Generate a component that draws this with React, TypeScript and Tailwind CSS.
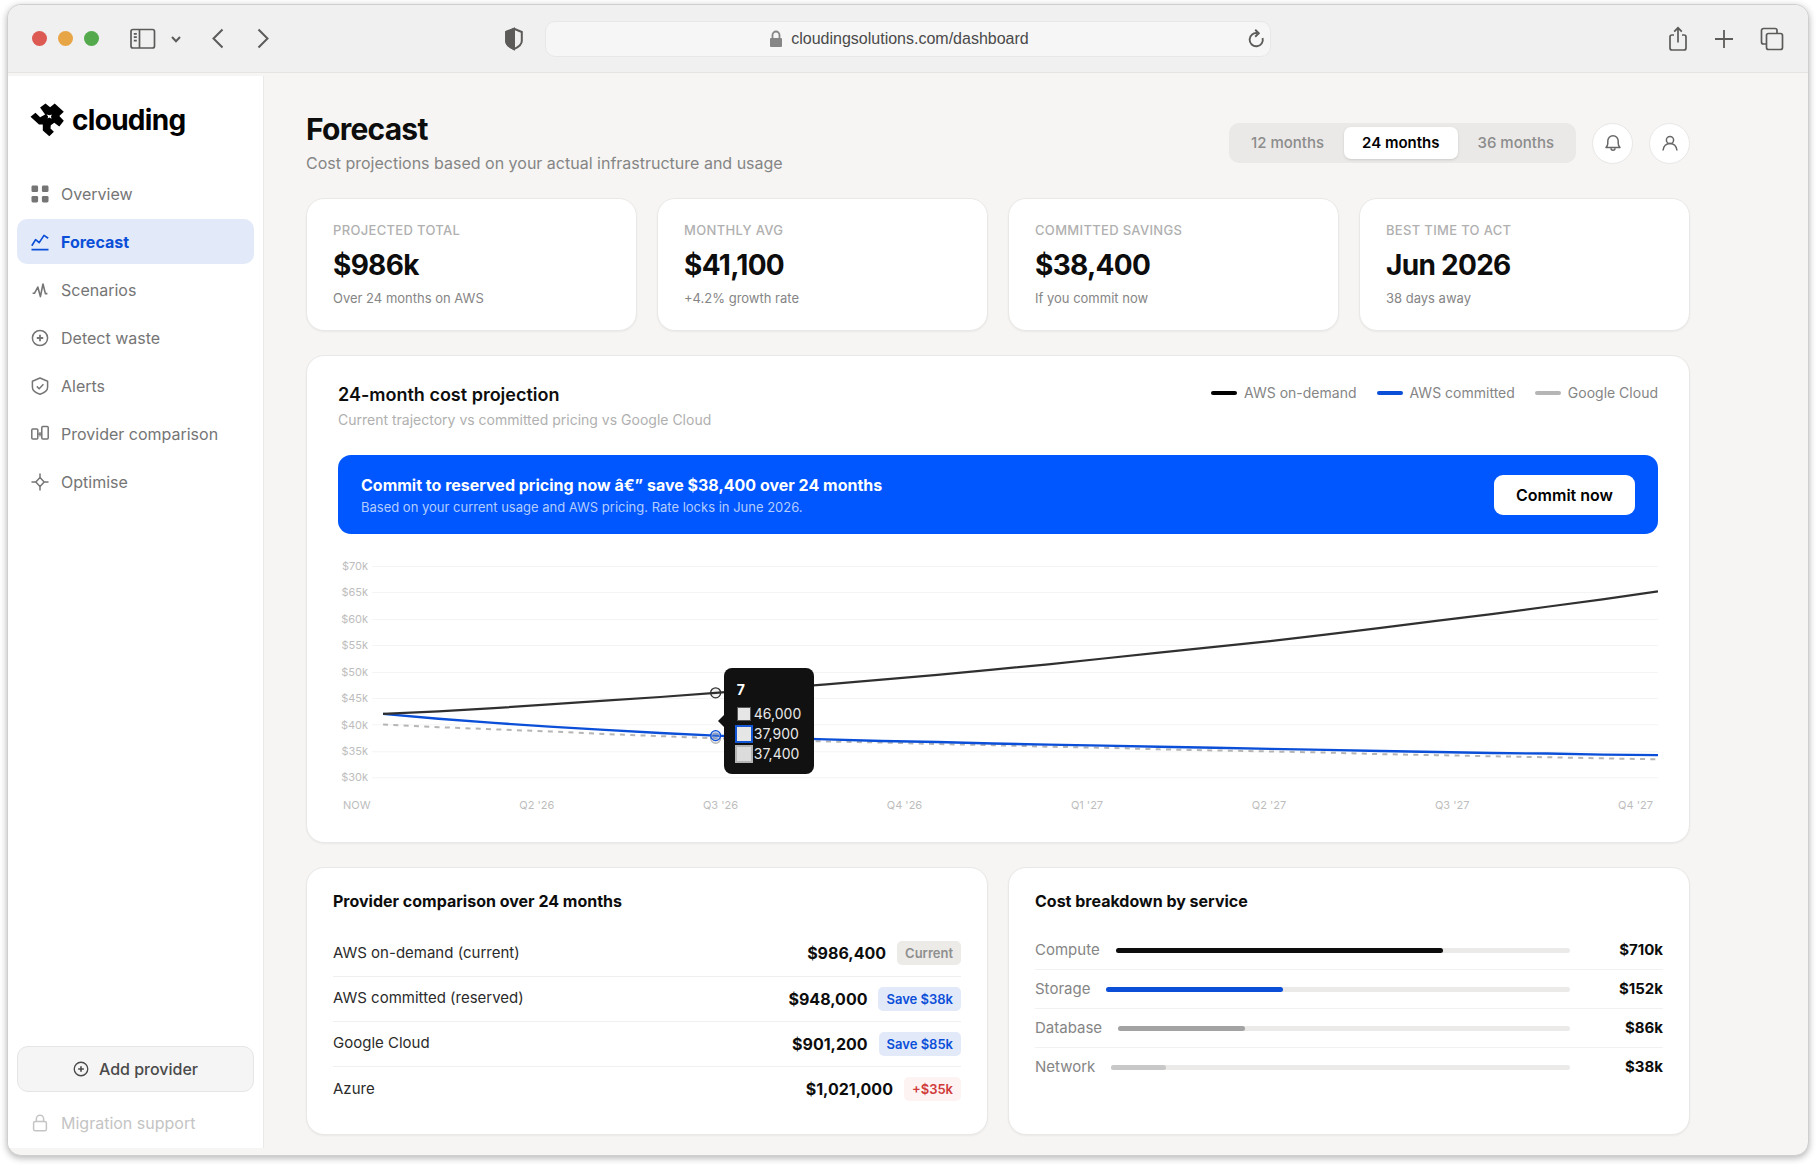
import React, { useState } from 'react';

type IconProps = { className?: string };

const Svg: React.FC<{ box?: string; className?: string; width?: number; children: React.ReactNode }> = ({
  box = '0 0 18 18',
  className = 'size-[18px]',
  width = 1.5,
  children,
}) => (
  <svg viewBox={box} className={className} fill="none" stroke="currentColor" strokeWidth={width} aria-hidden="true">
    {children}
  </svg>
);

const OverviewIcon = () => (
  <Svg>
    <g fill="currentColor" stroke="none">
      <rect x="0.5" y="0.5" width="6.6" height="6.6" rx="1.4" />
      <rect x="10.9" y="0.5" width="6.6" height="6.6" rx="1.4" />
      <rect x="0.5" y="10.9" width="6.6" height="6.6" rx="1.4" />
      <rect x="10.9" y="10.9" width="6.6" height="6.6" rx="1.4" />
    </g>
  </Svg>
);

const ForecastIcon = () => (
  <Svg width={1.7}>
    <path d="M0.8 12.8 4.6 6.6l3.6 3L13 2.4l4.2 2.9" strokeLinejoin="round" />
    <path d="M0.5 16.6h17" />
  </Svg>
);

const ScenariosIcon = () => (
  <Svg width={1.6}>
    <path d="M1.6 12.2h2L6.8 6l2.6 9.6L12 3l2.4 9.6h2" strokeLinejoin="round" />
  </Svg>
);

const CirclePlusIcon: React.FC<IconProps> = ({ className }) => (
  <Svg className={className}>
    <circle cx="9" cy="9" r="7.6" />
    <path d="M9 5.8v6.4M5.8 9h6.4" strokeWidth="1.8" />
  </Svg>
);

const AlertsIcon = () => (
  <Svg>
    <path d="M9 1 16.6 4.300v6c0 3.600-3.400 5.600-7.600 6.900-4.200-1.300-7.600-3.300-7.600-6.900v-6z" strokeLinejoin="round" />
    <path d="m5.8 9.4 2.4 2.3 4.200-4.400" />
  </Svg>
);

const CompareIcon = () => (
  <Svg>
    <rect x="0.8" y="4" width="6" height="10" rx="1" />
    <rect x="10.8" y="1.5" width="6.4" height="12.5" rx="1" />
    <path d="M6.8 9.2h4M9 7v4.4" strokeWidth="1.2" />
  </Svg>
);

const OptimiseIcon = () => (
  <Svg>
    <path d="m9 4.5 4.2 4.5L9 13.5 4.8 9z" strokeLinejoin="round" />
    <path d="M9 0.5v4M9 13.5v4M0.500 9h4.300M13.200 9h4.300" />
  </Svg>
);

const LockIcon = () => (
  <Svg>
    <rect x="2.6" y="7.4" width="12.8" height="9.4" rx="1.6" />
    <path d="M5.4 7.4V4.8a3.6 3.6 0 0 1 7.2 0v2.6" />
  </Svg>
);

const LogoMark = () => (
  <svg viewBox="0 0 34 34" className="size-[34px]" aria-hidden="true">
    <path d="M0.5 13.8 5.5 9.8l4.6 4.4 5-2.7-5-7L15.500 0.500l4.600 3.700L24.700 0.500l9.100 8.300-4.500 4.200 4.500 4.800-4.500 5.700-5-3.700-3.500 2.400-.3 3.300 3.400 3.300-4.600 4.400-6.500-5.700v-6H9z" />
    <path d="M16.600 11.400l2.900.9 2.300-.7-.8 2.200.6 2-2.400-1.200-1.600 1 .5-2z" fill="#fff" />
  </svg>
);

const navItems = [
  { name: 'Overview', Icon: OverviewIcon },
  { name: 'Forecast', Icon: ForecastIcon },
  { name: 'Scenarios', Icon: ScenariosIcon },
  { name: 'Detect waste', Icon: CirclePlusIcon },
  { name: 'Alerts', Icon: AlertsIcon },
  { name: 'Provider comparison', Icon: CompareIcon },
  { name: 'Optimise', Icon: OptimiseIcon },
];

const stats = [
  { label: 'PROJECTED TOTAL', value: '$986k', note: 'Over 24 months on AWS' },
  { label: 'MONTHLY AVG', value: '$41,100', note: '+4.2% growth rate' },
  { label: 'COMMITTED SAVINGS', value: '$38,400', note: 'If you commit now' },
  { label: 'BEST TIME TO ACT', value: 'Jun 2026', note: '38 days away' },
];

const legend = [
  { name: 'AWS on-demand', color: 'bg-black' },
  { name: 'AWS committed', color: 'bg-[#0b4fd8]' },
  { name: 'Google Cloud', color: 'bg-[#b5b5b5]' },
];

const providers = [
  { name: 'AWS on-demand (current)', cost: '$986,400', tag: 'Current', tone: 'bg-[#ecebe8] text-[#8f8f8f]' },
  { name: 'AWS committed (reserved)', cost: '$948,000', tag: 'Save $38k', tone: 'bg-[#e2eaf9] text-[#0b4fd8]' },
  { name: 'Google Cloud', cost: '$901,200', tag: 'Save $85k', tone: 'bg-[#e2eaf9] text-[#0b4fd8]' },
  { name: 'Azure', cost: '$1,021,000', tag: '+$35k', tone: 'bg-[#fdf3f3] text-[#d03a3a]' },
];

const services = [
  { name: 'Compute', share: 72, cost: '$710k', color: 'bg-[#0d0d0d]' },
  { name: 'Storage', share: 38, cost: '$152k', color: 'bg-[#0b4fd8]' },
  { name: 'Database', share: 28, cost: '$86k', color: 'bg-[#a3a3a3]' },
  { name: 'Network', share: 12, cost: '$38k', color: 'bg-[#c8c8c8]' },
];

// monthly cost in $k
const onDemand = [42, 42.5, 43.1, 43.8, 44.5, 45.2, 46, 46.8, 47.6, 48.5, 49.4, 50.4, 51.4, 52.5, 53.6, 54.7, 55.8, 57, 58.3, 59.6, 60.9, 62.3, 63.7, 65.2];
const committed = [42, 41.1, 40.3, 39.6, 39, 38.4, 37.9, 37.5, 37.2, 36.9, 36.7, 36.4, 36.2, 36, 35.8, 35.6, 35.4, 35.2, 35, 34.8, 34.6, 34.5, 34.3, 34.2];
const google = [40, 39.5, 39.1, 38.7, 38.2, 37.8, 37.4, 37.1, 36.8, 36.6, 36.3, 36.1, 35.8, 35.6, 35.3, 35.1, 34.9, 34.7, 34.4, 34.2, 34, 33.8, 33.6, 33.4];

const ticks = [70, 65, 60, 55, 50, 45, 40, 35, 30];
const quarters = ['NOW', "Q2 '26", "Q3 '26", "Q4 '26", "Q1 '27", "Q2 '27", "Q3 '27", "Q4 '27"];

const px = (i: number) => 45 + (i * 1274) / 23;
const py = (v: number) => 16 + (70 - v) * 5.28;
const line = (data: number[]) => data.map((v, i) => `${px(i).toFixed(1)},${py(v).toFixed(1)}`).join(' ');

const BrowserBar = () => (
  <header className="flex items-center h-[68px] px-6 bg-[#f0f0f0] border-b border-[#e4e4e4] text-[#5c5b59]">
    <div className="flex flex-1 items-center">
      <div className="flex gap-[11px]">
        <span className="size-[15px] rounded-full bg-[#dd5a52]" />
        <span className="size-[15px] rounded-full bg-[#e8a545]" />
        <span className="size-[15px] rounded-full bg-[#53a94c]" />
      </div>
      <button aria-label="Toggle sidebar" className="ml-[31px]">
        <Svg box="0 0 26 22" className="w-[26px] h-[22px]" width={1.7}>
          <rect x="1" y="1.5" width="23.5" height="18.5" rx="2" />
          <path d="M9.5 1.500V20M3.800 5.800h3M3.800 9.200h3M3.800 12.600h3" />
        </Svg>
      </button>
      <button aria-label="Tab groups" className="ml-[14px]">
        <Svg box="0 0 12 12" className="size-3" width={2}>
          <path d="m2 4 4 4.200L10 4" />
        </Svg>
      </button>
      <button aria-label="Back" className="ml-[29px]">
        <Svg box="0 0 14 22" className="w-[14px] h-[22px]" width={2}>
          <path d="M11.5 1.5 2.5 10.500l9 9" />
        </Svg>
      </button>
      <button aria-label="Forward" className="ml-[31px]">
        <Svg box="0 0 14 22" className="w-[14px] h-[22px]" width={2}>
          <path d="m2.5 1.5 9 9-9 9" />
        </Svg>
      </button>
      <button aria-label="Privacy report" className="ml-auto mr-[21px]">
        <Svg box="0 0 20 24" className="w-5 h-6" width={2}>
          <path d="M10 1.8 17.8 5v9c0 3.6-3.600 6.200-7.800 8.200C5.800 20.200 2.200 17.600 2.200 14V5z" />
          <path d="M10 1.8v20.400C5.800 20.200 2.200 17.600 2.200 14V5z" fill="currentColor" />
        </Svg>
      </button>
    </div>

    <div className="flex shrink items-center basis-[726px] h-9 px-[5px] rounded-[10px] bg-[#f6f6f6] border border-[#e7e7e7]">
      <div className="flex flex-1 items-center justify-center gap-2">
        <Svg box="0 0 14 18" className="w-[14px] h-[18px] text-[#868686]" width={1.8}>
          <rect x="1" y="8" width="12" height="9" rx="1" fill="currentColor" stroke="none" />
          <path d="M3.5 8.5V5a3.500 3.500 0 0 1 7 0v3.500" />
        </Svg>
        <input
          aria-label="Address"
          defaultValue="cloudingsolutions.com/dashboard"
          className="field-sizing-content bg-transparent outline-none text-base text-[#4a4a4a] font-['Liberation_Sans',sans-serif]"
        />
      </div>
      <button aria-label="Reload">
        <Svg box="0 0 18 20" className="w-[18px] h-5" width={1.9}>
          <path d="M10.5 4.2A6.600 6.600 0 1 0 15.600 9" />
          <path d="m8.2 0.8 3.600 3.500-3.600 3.500" />
        </Svg>
      </button>
    </div>

    <div className="flex flex-1 items-center justify-end gap-[26px]">
      <button aria-label="Share">
        <Svg box="0 0 20 26" className="w-5 h-[26px]" width={1.7}>
          <path d="M6 9H4a2 2 0 0 0-2 2v11a2 2 0 0 0 2 2h12a2 2 0 0 0 2-2V11a2 2 0 0 0-2-2h-2" />
          <path d="M10 16.5V2M6.200 5.600 10 1.800l3.800 3.800" />
        </Svg>
      </button>
      <button aria-label="New tab">
        <Svg box="0 0 20 20" className="size-5" width={1.8}>
          <path d="M10 1v18M1 10h18" />
        </Svg>
      </button>
      <button aria-label="Show all tabs">
        <Svg box="0 0 24 24" className="size-6" width={1.7}>
          <path d="M6.2 17H3.500A2 2 0 0 1 1.500 15V3.500a2 2 0 0 1 2-2H15a2 2 0 0 1 2 2V6" />
          <rect x="6.5" y="6.5" width="16" height="16" rx="2" />
        </Svg>
      </button>
    </div>
  </header>
);

const Sidebar = () => (
  <aside className="flex flex-col shrink-0 w-64 mt-[3px] mb-[7px] px-[9px] pt-[27px] pb-[7px] bg-white border-r border-[#e9e9e8]">
    <a href="#" className="flex items-center gap-2 h-[34px] pl-[13px] text-black">
      <LogoMark />
      <span className="text-[28px] leading-[34px] font-bold tracking-tight">clouding</span>
    </a>

    <nav className="mt-[34px] flex flex-col gap-[3px]">
      {navItems.map(({ name, Icon }) => (
        <a
          key={name}
          href="#"
          aria-current={name === 'Forecast' ? 'page' : undefined}
          className={`flex items-center gap-3 h-[45px] px-[14px] rounded-[10px] text-base ${
            name === 'Forecast' ? 'bg-[#e2e9f9] text-[#0b4fd8] font-bold' : 'text-[#757575]'
          }`}
        >
          <Icon />
          {name}
        </a>
      ))}
    </nav>

    <button className="mt-auto flex items-center justify-center gap-[10px] h-[46px] rounded-[11px] bg-[#f5f5f5] border border-[#e5e5e5] text-base font-medium text-[#4a4a4a]">
      <CirclePlusIcon className="size-4" />
      Add provider
    </button>
    <a href="#" className="mt-[13px] flex items-center gap-3 h-9 px-[14px] text-base text-[#c4c4c4]">
      <LockIcon />
      Migration support
    </a>
  </aside>
);

const Chart = () => (
  <div className="mt-4">
    <div className="relative">
      <svg viewBox="0 0 1319 236" className="block w-full" role="img" aria-label="24-month cost projection">
        {ticks.map((t) => (
          <g key={t}>
            <text x="30" y={py(t) + 4} textAnchor="end" fontSize="11" fill="#bdbdbd">
              ${t}k
            </text>
            <path d={`M34 ${Math.round(py(t)) + 0.5}H1319`} stroke="#f4f4f4" />
          </g>
        ))}
        <polyline points={line(google)} fill="none" stroke="#b5b5b5" strokeWidth="2" strokeDasharray="5 5.3" />
        <polyline points={line(committed)} fill="none" stroke="#0b4fd8" strokeWidth="2.4" />
        <polyline points={line(onDemand)} fill="none" stroke="#303030" strokeWidth="2.2" />
        <circle cx={px(6)} cy={py(46)} r="5" fill="#0000000d" stroke="#303030" strokeWidth="1.3" />
        <circle cx={px(6)} cy={py(37.4)} r="5" fill="#b5b5b533" stroke="#b5b5b5" strokeWidth="1.3" />
        <circle cx={px(6)} cy={py(37.9)} r="5" fill="#0b4fd833" stroke="#0b4fd8" strokeWidth="1.3" />
      </svg>

      <div className="absolute left-[29%] top-1/2 w-[90px] ml-[3px] pt-3 pb-[10px] px-[13px] rounded-lg bg-[#111] text-sm leading-5 text-[#e8e8e8]">
        <span className="absolute left-[-6px] top-1/2 -mt-[6px] border-y-[6px] border-r-[6px] border-y-transparent border-r-[#111]" />
        <div className="mb-1 font-bold text-white">7</div>
        <div className="flex items-center gap-[3px]">
          <span className="size-[14px] shrink-0 bg-[#e6e6e6] border border-[#555]" />
          46,000
        </div>
        <div className="flex items-center gap-[3px]">
          <span className="size-[14px] shrink-0 bg-[#e6e6e6] ring-2 ring-[#1457d6]" />
          37,900
        </div>
        <div className="flex items-center gap-[3px]">
          <span className="size-[14px] shrink-0 bg-[#dcdcdc] ring-2 ring-[#b5b5b5]" />
          37,400
        </div>
      </div>
    </div>
    <div className="mt-[11px] px-[5px] flex justify-between text-[11px] leading-4 text-[#bdbdbd]">
      {quarters.map((q) => (
        <span key={q}>{q}</span>
      ))}
    </div>
  </div>
);

const App: React.FC = () => {
  const [months, setMonths] = useState(24);

  return (
    <div className="min-h-screen flex pt-1 px-[7px] pb-[10px] bg-white font-[Inter,sans-serif]">
      <div className="flex-1 flex flex-col overflow-hidden rounded-[14px] border border-[#cfcfcf] bg-[#f6f5f3] shadow-[0_2px_7px_rgba(0,0,0,0.3)]">
        <BrowserBar />

        <div className="flex flex-1">
          <Sidebar />

          <main className="flex-1 pl-[42px] pr-6 pt-[38px]">
            <div className="max-w-[1384px]">
              <div className="flex items-center justify-between">
                <div>
                  <h1 className="text-3xl leading-9 font-bold tracking-tight text-[#0d0d0d]">Forecast</h1>
                  <p className="mt-1 text-base text-[#858585]">
                    Cost projections based on your actual infrastructure and usage
                  </p>
                </div>
                <div className="flex items-center gap-4">
                  <div className="flex items-center gap-[2px] h-10 px-1 rounded-[10px] bg-[#eae9e7]">
                    {[12, 24, 36].map((m) => (
                      <button
                        key={m}
                        onClick={() => setMonths(m)}
                        aria-pressed={months === m}
                        className={`h-8 px-[18px] rounded-[7px] text-[15px] ${
                          months === m ? 'bg-white text-black font-semibold shadow-sm' : 'text-[#8c8c8c] font-medium'
                        }`}
                      >
                        {m} months
                      </button>
                    ))}
                  </div>
                  <button
                    aria-label="Notifications"
                    className="flex items-center justify-center size-[41px] rounded-full bg-white border border-[#e8e7e5] text-[#666]"
                  >
                    <Svg>
                      <path d="M2 13.5h14c-1.300-1.200-1.800-2.300-1.800-4.300V7a5.200 5.200 0 0 0-10.400 0v2.200c0 2-.5 3.100-1.800 4.300z" strokeLinejoin="round" />
                      <path d="M7 14.2a2 2 0 0 0 4 0" />
                    </Svg>
                  </button>
                  <button
                    aria-label="Account"
                    className="flex items-center justify-center size-[41px] rounded-full bg-white border border-[#e8e7e5] text-[#666]"
                  >
                    <Svg>
                      <circle cx="9" cy="6" r="3.6" />
                      <path d="M2 16.5c.6-4.200 3.400-6.900 7-6.900s6.400 2.700 7 6.900" />
                    </Svg>
                  </button>
                </div>
              </div>

              <section className="mt-[23px] grid grid-cols-4 gap-5">
                {stats.map((s) => (
                  <div key={s.label} className="px-[26px] pt-[21px] pb-[22px] rounded-[18px] bg-white border border-[#e9e8e6] shadow-xs">
                    <h2 className="text-[13px] leading-5 font-medium tracking-wide text-[#b0b0b0]">{s.label}</h2>
                    <p className="mt-[7px] text-[28px] leading-9 font-bold tracking-tight text-[#0d0d0d]">{s.value}</p>
                    <p className="mt-[5px] text-[13px] leading-5 text-[#858585]">{s.note}</p>
                  </div>
                ))}
              </section>

              <section className="mt-6 px-[31px] pt-[27px] pb-[29px] rounded-[18px] bg-white border border-[#e9e8e6] shadow-xs">
                <div className="flex justify-between">
                  <div>
                    <h2 className="text-lg leading-6 font-semibold text-[#0d0d0d]">24-month cost projection</h2>
                    <p className="mt-[3px] text-sm text-[#b0b0b0]">Current trajectory vs committed pricing vs Google Cloud</p>
                  </div>
                  <ul className="flex gap-5 text-sm text-[#858585]">
                    {legend.map((l) => (
                      <li key={l.name} className="flex items-center gap-[7px] h-5">
                        <span className={`w-[26px] h-1 rounded-full ${l.color}`} />
                        {l.name}
                      </li>
                    ))}
                  </ul>
                </div>

                <div className="mt-[25px] flex items-center justify-between h-[79px] px-[23px] rounded-[13px] bg-[#0057ff]">
                  <div>
                    <p className="text-base font-bold text-white">
                      Commit to reserved pricing now â€” save $38,400 over 24 months
                    </p>
                    <p className="text-[13px] leading-5 text-[#b3cdff]">
                      Based on your current usage and AWS pricing. Rate locks in June 2026.
                    </p>
                  </div>
                  <button className="h-10 px-[22px] rounded-[9px] bg-white text-base font-semibold text-black">Commit now</button>
                </div>

                <Chart />
              </section>

              <div className="mt-6 mb-5 grid grid-cols-2 gap-5">
                <section className="px-[26px] pt-[21px] pb-[23px] rounded-[18px] bg-white border border-[#e9e8e6] shadow-xs">
                  <h2 className="text-base font-bold text-[#0d0d0d]">Provider comparison over 24 months</h2>
                  <table className="mt-[18px] w-full">
                    <tbody className="divide-y divide-[#efefef]">
                      {providers.map((p) => (
                        <tr key={p.name} className="h-[45px]">
                          <th scope="row" className="text-left text-[15px] font-normal text-[#2b2b2b]">
                            {p.name}
                          </th>
                          <td>
                            <div className="flex items-center justify-end gap-[11px]">
                              <span className="text-base font-bold text-[#0d0d0d]">{p.cost}</span>
                              <span className={`h-6 px-2 rounded-[5px] text-[13px] leading-6 font-semibold ${p.tone}`}>{p.tag}</span>
                            </div>
                          </td>
                        </tr>
                      ))}
                    </tbody>
                  </table>
                </section>

                <section className="px-[26px] pt-[21px] pb-[23px] rounded-[18px] bg-white border border-[#e9e8e6] shadow-xs">
                  <h2 className="text-base font-bold text-[#0d0d0d]">Cost breakdown by service</h2>
                  <ul className="mt-[18px] divide-y divide-[#f1f1f1]">
                    {services.map((s) => (
                      <li key={s.name} className="flex items-center gap-4 h-[39px] text-[15px]">
                        <span className="text-[#858585]">{s.name}</span>
                        <div className="flex-1 h-[5px] rounded-full bg-[#eceae9]">
                          <div className={`h-full rounded-full ${s.color}`} style={{ width: `${s.share}%` }} />
                        </div>
                        <span className="w-[77px] text-right font-bold text-[#0d0d0d]">{s.cost}</span>
                      </li>
                    ))}
                  </ul>
                </section>
              </div>
            </div>
          </main>
        </div>
      </div>
    </div>
  );
};

export default App;
